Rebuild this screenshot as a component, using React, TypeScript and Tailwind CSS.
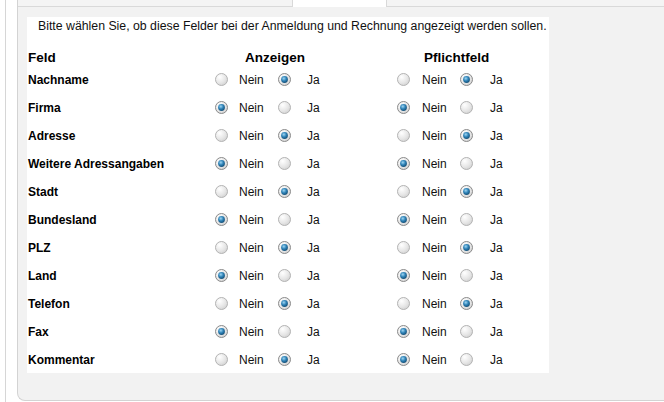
import React from 'react';

type Row = { name: string; show: boolean; required: boolean };

const rows: Row[] = [
  { name: 'Nachname', show: true, required: true },
  { name: 'Firma', show: false, required: false },
  { name: 'Adresse', show: true, required: true },
  { name: 'Weitere Adressangaben', show: false, required: false },
  { name: 'Stadt', show: true, required: true },
  { name: 'Bundesland', show: false, required: false },
  { name: 'PLZ', show: true, required: true },
  { name: 'Land', show: false, required: false },
  { name: 'Telefon', show: true, required: true },
  { name: 'Fax', show: false, required: false },
  { name: 'Kommentar', show: true, required: false },
];

// old windows-style radio button
const Radio = ({ checked }: { checked: boolean }) => (
  <svg width="13" height="13" viewBox="0 0 13 13" className="block">
    <defs>
      <radialGradient id="rOff" cx="0.35" cy="0.3" r="0.8">
        <stop offset="0" stopColor="#ffffff" />
        <stop offset="0.6" stopColor="#e6e6e6" />
        <stop offset="1" stopColor="#cfcfcf" />
      </radialGradient>
      <radialGradient id="rDot" cx="0.4" cy="0.35" r="0.7">
        <stop offset="0" stopColor="#9fd6f2" />
        <stop offset="0.5" stopColor="#2f83b8" />
        <stop offset="1" stopColor="#124a70" />
      </radialGradient>
    </defs>
    <circle cx="6.5" cy="6.5" r="6" fill="url(#rOff)" stroke={checked ? '#8a8a8a' : '#b3b3b3'} />
    {checked && <circle cx="6.5" cy="6.5" r="3.4" fill="url(#rDot)" />}
  </svg>
);

const Choice = ({ yes }: { yes: boolean }) => (
  <>
    <div className="flex items-center">
      <Radio checked={!yes} />
    </div>
    <div>Nein</div>
    <div className="flex items-center">
      <Radio checked={yes} />
    </div>
    <div>Ja</div>
  </>
);

const grid = 'grid grid-cols-[188px_24px_39px_29px_90px_25px_38px_30px_1fr]';

const App = () => {
  return (
    <div className="h-[402px] w-[664px] overflow-hidden bg-white pl-[5px] font-['Liberation_Sans',Arial,sans-serif] text-[12px] text-[#111]">
      <div className="h-full border-l border-[#d6d6d6] pl-[11px]">
        <div className="h-[401px] rounded-bl-[8px] border-b border-l border-[#d3d3d3] bg-[#f2f2f2]">
          {/* tab strip */}
          <div className="flex h-[7px]">
            <div className="w-[274px] border-b border-[#d9d9d9] bg-[#f4f4f4]" />
            <div className="w-[95px] border-x border-[#d9d9d9] bg-white" />
            <div className="flex-1 border-b border-[#d9d9d9] bg-[#f4f4f4]" />
          </div>

          <div className="ml-[9px] mt-[10px] w-[522px] bg-white">
            <p className="pl-[11px] pt-[1px] text-[12.3px] leading-[16px]">
              Bitte wählen Sie, ob diese Felder bei der Anmeldung und Rechnung angezeigt werden sollen.
            </p>

            <div className={`${grid} mt-[17px] h-[14px] items-center text-[13.5px] font-bold leading-[14px] text-black`}>
              <div className="pl-[1px]">Feld</div>
              <div className="col-span-4 pl-[30px]">Anzeigen</div>
              <div className="col-span-4 pl-[27px]">Pflichtfeld</div>
            </div>

            {rows.map((r) => (
              <div key={r.name} className={`${grid} h-[28px] items-center pt-[1px] leading-[14px]`}>
                <div className="pl-[1px] font-bold text-black">{r.name}</div>
                <Choice yes={r.show} />
                <Choice yes={r.required} />
              </div>
            ))}
          </div>
        </div>
      </div>
    </div>
  );
};

export default App;
